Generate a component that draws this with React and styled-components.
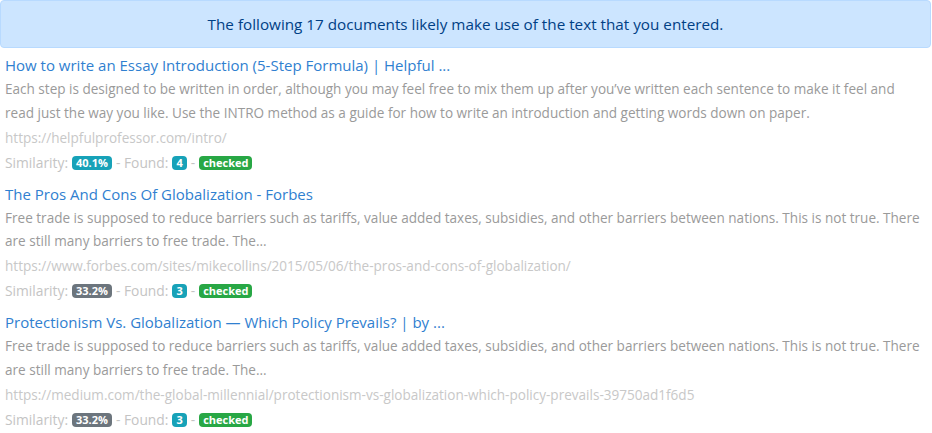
import React from 'react';
import styled, { createGlobalStyle } from 'styled-components';

const GlobalStyle = createGlobalStyle`
  html, body {
    margin: 0;
    padding: 0;
    background: #fff;
  }
  body {
    font-family: "Open Sans", "Noto Sans", sans-serif;
  }
`;

const Page = styled.div`
  width: 932px;
  padding: 0 1px 0 0;
  box-sizing: border-box;
`;

const Alert = styled.div`
  background: #cce5ff;
  border: 1px solid #b8daff;
  border-radius: 4px;
  color: #004085;
  text-align: center;
  font-size: 15.25px;
  line-height: 22px;
  padding: 12px 10px;
  margin-bottom: 5px;
`;

const Results = styled.div`
  display: flex;
  flex-direction: column;
  gap: 6.5px;
  padding: 0 5px;
`;

const Result = styled.div`
  display: flex;
  flex-direction: column;
`;

const Title = styled.a`
  color: #3080d0;
  font-size: 15px;
  line-height: 25px;
  text-decoration: none;
`;

const Snippet = styled.p`
  margin: 0;
  color: #9a9a9a;
  font-size: 13.55px;
  line-height: 23.75px;
`;

const Url = styled.div`
  color: #c8c8c8;
  font-size: 13.55px;
  line-height: 25px;
`;

const Meta = styled.div`
  color: #c4c4c4;
  font-size: 13.8px;
  line-height: 24.5px;
  display: flex;
  align-items: center;
  gap: 4px;
`;

const Badge = styled.span`
  display: inline-block;
  background: ${p => p.$bg};
  color: #fff;
  font-size: 11px;
  font-weight: 700;
  line-height: 14px;
  padding: 0 4px;
  border-radius: 4px;
`;

const results = [
  {
    title: 'How to write an Essay Introduction (5-Step Formula) | Helpful ...',
    snippet: 'Each step is designed to be written in order, although you may feel free to mix them up after you\u2019ve written each sentence to make it feel and read just the way you like. Use the INTRO method as a guide for how to write an introduction and getting words down on paper.',
    url: 'https://helpfulprofessor.com/intro/',
    similarity: '40.1%',
    simColor: '#17a2b8',
    found: 4,
  },
  {
    title: 'The Pros And Cons Of Globalization - Forbes',
    snippet: 'Free trade is supposed to reduce barriers such as tariffs, value added taxes, subsidies, and other barriers between nations. This is not true. There are still many barriers to free trade. The...',
    url: 'https://www.forbes.com/sites/mikecollins/2015/05/06/the-pros-and-cons-of-globalization/',
    similarity: '33.2%',
    simColor: '#6c757d',
    found: 3,
  },
  {
    title: 'Protectionism Vs. Globalization \u2014 Which Policy Prevails? | by ...',
    snippet: 'Free trade is supposed to reduce barriers such as tariffs, value added taxes, subsidies, and other barriers between nations. This is not true. There are still many barriers to free trade. The...',
    url: 'https://medium.com/the-global-millennial/protectionism-vs-globalization-which-policy-prevails-39750ad1f6d5',
    similarity: '33.2%',
    simColor: '#6c757d',
    found: 3,
  },
];

export default function App() {
  return (
    <>
      <GlobalStyle />
      <Page>
        <Alert>The following 17 documents likely make use of the text that you entered.</Alert>
        <Results>
          {results.map((r, i) => (
            <Result key={i}>
              <Title href="#">{r.title}</Title>
              <Snippet>{r.snippet}</Snippet>
              <Url>{r.url}</Url>
              <Meta>
                Similarity: <Badge $bg={r.simColor}>{r.similarity}</Badge> - Found:{' '}
                <Badge $bg="#17a2b8">{r.found}</Badge> - <Badge $bg="#28a745">checked</Badge>
              </Meta>
            </Result>
          ))}
        </Results>
      </Page>
    </>
  );
}
